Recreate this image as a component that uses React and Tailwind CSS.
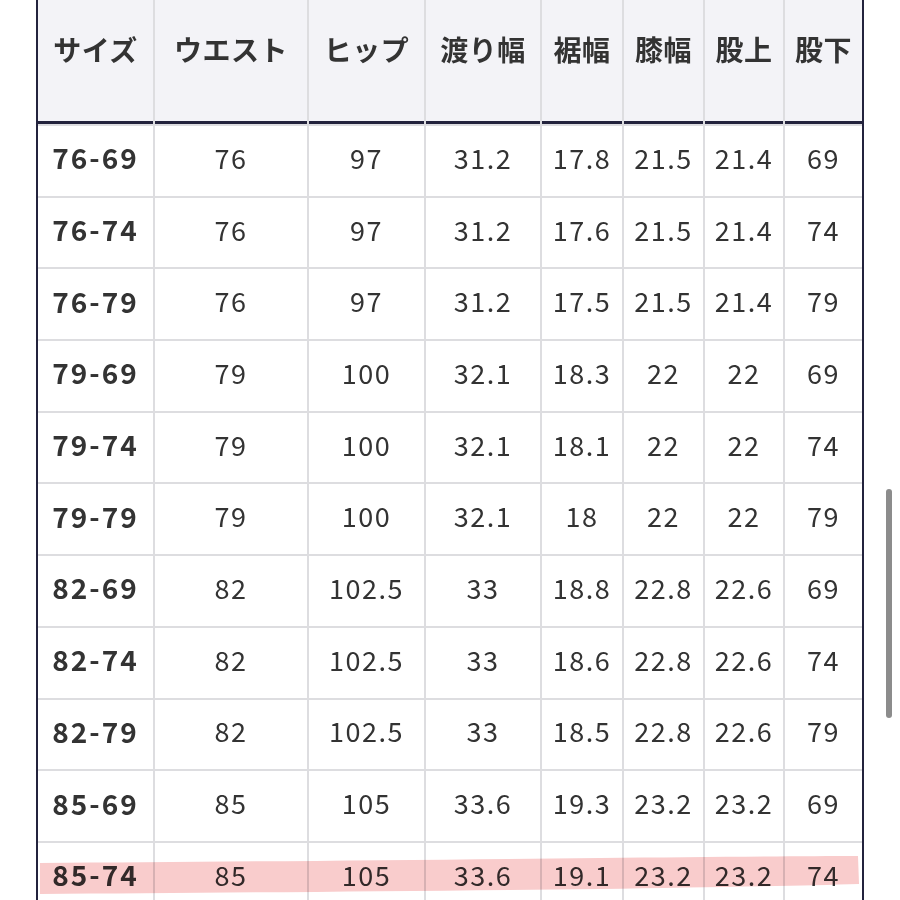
import React from "react";

const headers = ["サイズ", "ウエスト", "ヒップ", "渡り幅", "裾幅", "膝幅", "股上", "股下"];
const rows = [
  ["76-69", "76", "97", "31.2", "17.8", "21.5", "21.4", "69"],
  ["76-74", "76", "97", "31.2", "17.6", "21.5", "21.4", "74"],
  ["76-79", "76", "97", "31.2", "17.5", "21.5", "21.4", "79"],
  ["79-69", "79", "100", "32.1", "18.3", "22", "22", "69"],
  ["79-74", "79", "100", "32.1", "18.1", "22", "22", "74"],
  ["79-79", "79", "100", "32.1", "18", "22", "22", "79"],
  ["82-69", "82", "102.5", "33", "18.8", "22.8", "22.6", "69"],
  ["82-74", "82", "102.5", "33", "18.6", "22.8", "22.6", "74"],
  ["82-79", "82", "102.5", "33", "18.5", "22.8", "22.6", "79"],
  ["85-69", "85", "105", "33.6", "19.3", "23.2", "23.2", "69"],
  ["85-74", "85", "105", "33.6", "19.1", "23.2", "23.2", "74"],
];

const font = { fontFamily: '"Noto Sans CJK JP", "Noto Sans", sans-serif' };

export default function App() {
  return (
    <div className="relative h-[900px] w-[900px] overflow-hidden bg-white" style={font}>
      <div className="pl-[36px]">
        <div className="w-[828px] border-x-2 border-[#23233d]">
          <div className="grid grid-cols-[115px_152px_115px_114px_80px_79px_78px_77px] gap-x-[2px] gap-y-[2px] bg-[#dddde0]">
            {headers.map((h) => (
              <div
                key={h}
                className="flex h-[124px] items-start justify-center border-b-[3px] border-[#23233d] bg-[#f3f3f7] pt-[29px] text-[28px] font-bold leading-[40px] tracking-[0.5px] text-[#333]"
              >
                {h}
              </div>
            ))}
            {rows.map((r, i) =>
              r.map((c, j) => (
                <div
                  key={i + "-" + j}
                  className={
                    "flex h-[69.7px] items-center justify-center bg-white pb-[7px] leading-none text-[#333] " +
                    (j === 0
                      ? "text-[28px] font-bold tracking-[2px]"
                      : "text-[27px] font-normal tracking-[1.5px]")
                  }
                >
                  {c}
                </div>
              ))
            )}
          </div>
        </div>
      </div>
      <svg
        className="pointer-events-none absolute left-0 top-0 mix-blend-multiply"
        width="900"
        height="900"
        viewBox="0 0 900 900"
      >
        <path
          d="M40 863 C200 862 400 860 600 858 C700 857 800 856 858 856 L859 884 C800 886 700 887 600 889 C400 891 200 893 40 894 Z"
          fill="#f9cccc"
        />
      </svg>
      <div className="absolute left-[886px] top-[489px] h-[229px] w-[6px] rounded-full bg-[#8c8c8c]" />
    </div>
  );
}
